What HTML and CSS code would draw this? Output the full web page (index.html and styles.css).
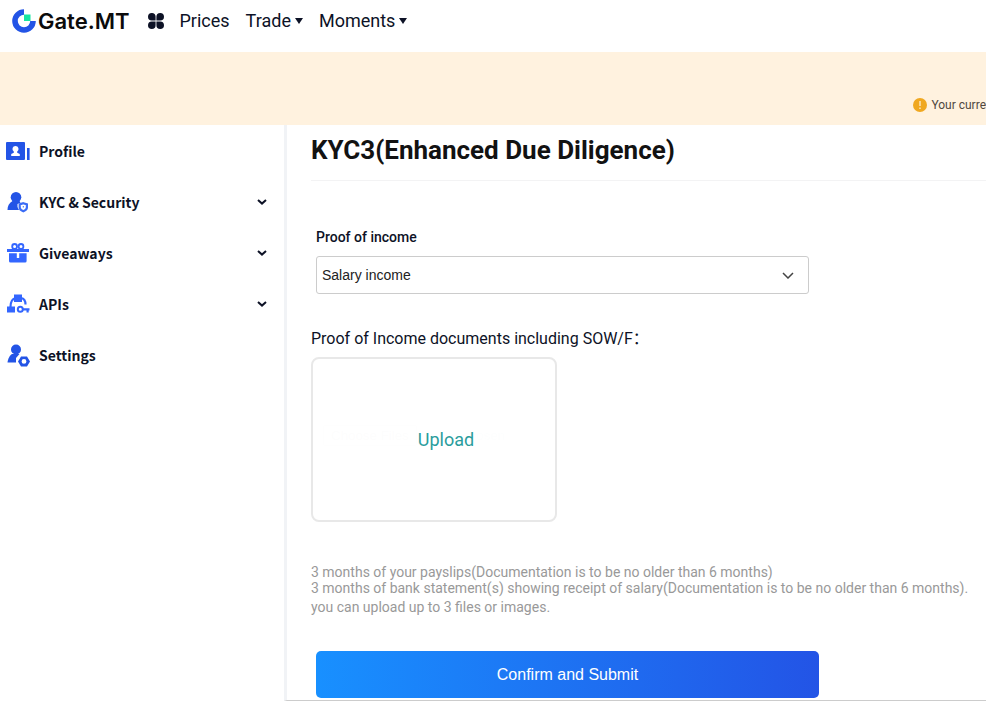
FILE: index.html
```html
<!DOCTYPE html>
<html lang="en">
<head>
  <meta charset="UTF-8" />
  <meta name="viewport" content="width=device-width, initial-scale=1.0"/>
  <title>KYC3 - Gate.MT</title>
  <link rel="stylesheet" href="styles.css">
</head>
<body>
  <header>
    <a class="logo" href="#">
      <svg width="24" height="24" viewBox="0 0 24 24">
        <path d="M12 3A9 9 0 1 0 21 12" fill="none" stroke="#2354e6" stroke-width="5.6"/>
        <path d="M12 5.500h6.500V12H12z" fill="#17e5a1"/>
      </svg>
      <span>Gate.MT</span>
    </a>
    <nav>
      <a class="apps" href="#" aria-label="Apps">
        <svg width="16" height="16" viewBox="0 0 16 16" fill="#0d1226">
          <path d="M3.8 0h.2a3.6 3.6 0 0 1 3.6 3.8v3.8H3.8A3.8 3.8 0 0 1 3.8 0zM12.2 0a3.8 3.8 0 0 1 0 7.6H8.4V3.8A3.8 3.8 0 0 1 12.2 0zM3.8 8.4h3.8v3.8a3.8 3.8 0 1 1-3.8-3.8zM8.4 8.4h3.8a3.8 3.8 0 1 1-3.8 3.8z"/>
        </svg>
      </a>
      <a href="#">Prices</a>
      <a href="#">Trade<i class="caret"></i></a>
      <a href="#">Moments<i class="caret"></i></a>
    </nav>
  </header>

  <div class="notice">
    <svg width="14" height="14" viewBox="0 0 14 14">
      <circle cx="7" cy="7" r="7" fill="#f0a820"/>
      <path d="M7 3v5M7 9.6v1.4" stroke="#fff3e0" stroke-width="1.2"/>
    </svg>
    <span>Your curre</span>
  </div>

  <div class="layout">
    <aside>
      <a href="#">
        <svg width="24" height="24" viewBox="0 0 24 24" fill="#2354e6">
          <path fill-rule="evenodd" d="M1 3h17a1 1 0 0 1 1 1v16a1 1 0 0 1-1 1H1a1 1 0 0 1-1-1V4a1 1 0 0 1 1-1zM9.500 7a3 3 0 0 0-1.700 5.500v1.200L5.200 15v2h8.600v-2l-2.600-1.300v-1.200A3 3 0 0 0 9.500 7z"/>
          <path d="M21 9h2.600v12H21z"/>
        </svg>
        <span>Profile</span>
      </a>
      <a href="#">
        <svg width="24" height="24" viewBox="0 0 24 24">
          <circle cx="10" cy="7.300" r="5.300" fill="#2354e6"/>
          <path d="M6.500 11h7l1 1.800-3 1.200v3l1.500 3H1.500c0-4 1.500-7 5-9z" fill="#2354e6"/>
          <path d="M17.300 13.200l3.600 1.200v3.200c0 1.700-1.300 2.800-3.600 3.700-2.300-.9-3.600-2-3.600-3.700v-3.200z" fill="#fff" stroke="#3b6cf5" stroke-width="2.200"/>
          <path d="M16.800 16h1v1.500h-1z" fill="#3b6cf5"/>
        </svg>
        <span>KYC &amp; Security</span>
        <svg class="chevron" width="10" height="6" viewBox="0 0 10 6"><path d="M1 1l4 3.600L9 1"/></svg>
      </a>
      <a href="#">
        <svg width="24" height="24" viewBox="0 0 24 24" fill="#3366ff">
          <path d="M1 8h22v3H1zM3 12.200h7.800v4.800h2.400v-4.800H20.600v7.800a1.500 1.500 0 0 1-1.500 1.500H4.500A1.500 1.500 0 0 1 3 20z"/>
          <circle cx="8.600" cy="5.400" r="2.400" fill="none" stroke="#3366ff" stroke-width="1.800"/>
          <circle cx="15" cy="5.400" r="2.400" fill="none" stroke="#3366ff" stroke-width="1.800"/>
        </svg>
        <span>Giveaways</span>
        <svg class="chevron" width="10" height="6" viewBox="0 0 10 6"><path d="M1 1l4 3.600L9 1"/></svg>
      </a>
      <a href="#">
        <svg width="24" height="24" viewBox="0 0 24 24" fill="#3366ff">
          <path d="M8 2.500h8v7.500H8zM1 14.500h8v6H1z"/>
          <path d="M4.500 15c0-5 1-8 5-9M15 6c3 .500 4.500 3 4.500 6.500M17 17.300h6.500M21.600 17.500v3" fill="none" stroke="#3366ff" stroke-width="2.200"/>
          <circle cx="14.300" cy="17.300" r="2.500" fill="none" stroke="#3366ff" stroke-width="2"/>
        </svg>
        <span>APIs</span>
        <svg class="chevron" width="10" height="6" viewBox="0 0 10 6"><path d="M1 1l4 3.600L9 1"/></svg>
      </a>
      <a href="#">
        <svg width="24" height="24" viewBox="0 0 24 24" fill="#2354e6">
          <circle cx="10" cy="6.500" r="5"/>
          <path d="M6 11h7.500l-3.500 4v4.500H1.500C2 15.500 4 12 6 11z"/>
          <path fill-rule="evenodd" d="M15 13.500h6l3 5-3 5h-6l-3-5zM18 16a2.400 2.400 0 1 0 0 4.800 2.400 2.400 0 0 0 0-4.800z"/>
        </svg>
        <span>Settings</span>
      </a>
    </aside>

    <main>
      <h1>KYC3(Enhanced Due Diligence)</h1>
      <form>
        <div class="field">
          <label for="income">Proof of income</label>
          <div class="select-wrap">
            <select id="income">
              <option>Salary income</option>
            </select>
            <svg width="12" height="7" viewBox="0 0 12 7"><path d="M1 1l5 5 5-5"/></svg>
          </div>
        </div>

        <label class="doc-label" for="docs">Proof of Income documents including SOW/F：</label>
        <label class="upload">
          <input type="file" id="docs" multiple>
          <span>Upload</span>
        </label>

        <div class="hints">
          <p>3 months of your payslips(Documentation is to be no older than 6 months)</p>
          <p>3 months of bank statement(s) showing receipt of salary(Documentation is to be no older than 6 months).</p>
          <p class="limit">you can upload up to 3 files or images.</p>
        </div>

        <button type="submit">Confirm and Submit</button>
      </form>
    </main>
  </div>
</body>
</html>
```
FILE: styles.css
```css
* { box-sizing: border-box; }
body { margin: 0; background: #fff; color: #0d1226; font-family: Roboto, "Noto Sans CJK SC", sans-serif; overflow-x: hidden; }
a { color: inherit; text-decoration: none; }

header { display: flex; align-items: center; height: 52px; padding: 0 12px 10px; }
.logo { display: flex; align-items: center; gap: 2px; font-family: Inter, sans-serif; font-size: 22px; font-weight: 600; line-height: 24px; color: #0b0b0b; }
nav { display: flex; align-items: center; gap: 16px; margin-left: 18px; font-size: 18px; line-height: 24px; }
.apps { display: flex; }
.caret { display: inline-block; margin-left: 4px; border: 4px solid transparent; border-top: 6px solid #0d1226; border-bottom: 0; vertical-align: 3px; }

.notice { display: flex; justify-content: flex-end; align-items: center; gap: 4px; background: #fff2df; padding: 32px 0 0; height: 73px; font-size: 12px; color: #50483f; white-space: nowrap; }

.layout { display: flex; }
aside { width: 284px; flex-shrink: 0; }
aside a { display: flex; align-items: center; gap: 9px; height: 51px; padding: 0 17px 0 6px; font-family: "Noto Sans CJK SC", sans-serif; font-size: 14px; font-weight: 700; }
.chevron { margin-left: auto; fill: none; stroke: #0d1226; stroke-width: 2; }

main { flex: 1; min-width: 0; border-left: 3px solid #f1f3f6; border-bottom: 1px solid #ccc; padding: 0 0 2px 24px; }
h1 { margin: 0; padding: 9px 0 13px; border-bottom: 1px solid #f3f3f4; font-size: 26px; line-height: 33px; font-weight: 700; color: #121212; white-space: nowrap; }
.field { padding: 46px 5px 0; }
.field label { display: block; font-size: 14px; line-height: 20px; font-weight: 500; margin-bottom: 9px; }
.select-wrap { position: relative; max-width: 493px; }
.select-wrap select { display: block; width: 100%; height: 38px; padding: 0 5px; border: 1px solid #ccc; border-radius: 3px; background: #fff; appearance: none; font: 14px "Liberation Sans", Arial, sans-serif; color: #222; }
.select-wrap svg { position: absolute; right: 15px; top: 16px; fill: none; stroke: #444; stroke-width: 1.5; pointer-events: none; }

.doc-label { display: block; margin: 33px 0 6px; font-size: 16px; line-height: 24px; }
.upload { position: relative; display: flex; align-items: center; justify-content: center; max-width: 246px; height: 165px; padding-left: 24px; border: 2px solid #e8e8e8; border-radius: 8px; font-size: 18px; color: #2a9d9d; cursor: pointer; }
.upload input { position: absolute; inset: 66px 10px auto; width: 220px; opacity: 0.01; }

.hints { margin-top: 42px; font-size: 14px; line-height: 16px; color: #999; }
.hints p { margin: 0; }
.hints .limit { line-height: 23px; }

button { display: block; width: 100%; max-width: 503px; height: 47px; margin: 32px 5px 0; border: none; border-radius: 5px; background: linear-gradient(90deg, #1890ff, #2354e6); color: #fff; font: 16px "Liberation Sans", Arial, sans-serif; cursor: pointer; }
```
